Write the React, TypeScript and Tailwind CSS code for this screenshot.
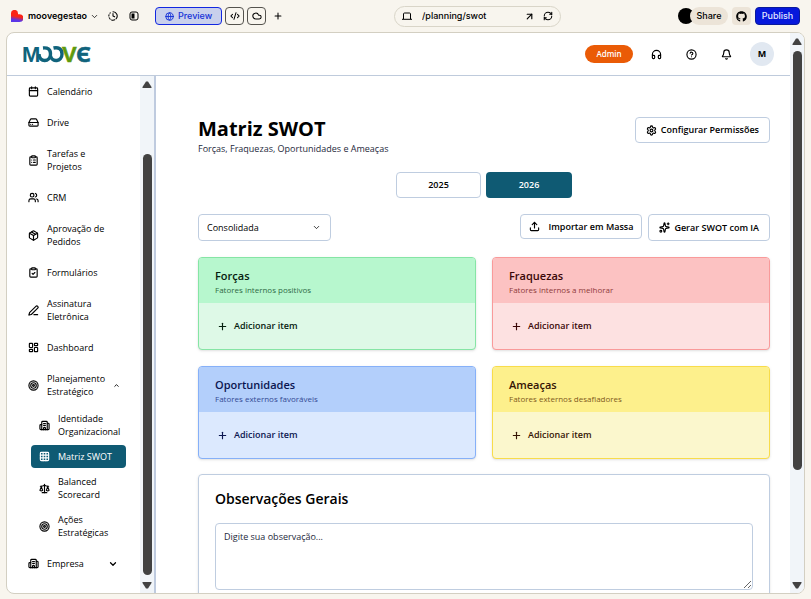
import type { ReactNode } from "react";
import {
  ArrowUpRight,
  Bell,
  Building2,
  Calendar,
  ChevronDown,
  ChevronUp,
  CircleHelp,
  ClipboardCheck,
  ClipboardList,
  ClockFading,
  Cloud,
  CodeXml,
  Globe,
  Grid3x3,
  HardDrive,
  Headphones,
  LayoutDashboard,
  Package,
  PenLine,
  Plus,
  RefreshCw,
  Scale,
  Settings,
  Sparkles,
  Target,
  Upload,
  Users,
  type LucideIcon,
} from "lucide-react";
import { FaGithub } from "react-icons/fa";

type NavItem = {
  label: string;
  icon: LucideIcon;
  active?: boolean;
  state?: "open" | "closed";
  children?: NavItem[];
};

type Quadrant = {
  title: string;
  hint: string;
  card: string;
  head: string;
  titleColor: string;
  hintColor: string;
};

const NAV: NavItem[] = [
  { label: "Calendário", icon: Calendar },
  { label: "Drive", icon: HardDrive },
  { label: "Tarefas e Projetos", icon: ClipboardList },
  { label: "CRM", icon: Users },
  { label: "Aprovação de Pedidos", icon: Package },
  { label: "Formulários", icon: ClipboardCheck },
  { label: "Assinatura Eletrônica", icon: PenLine },
  { label: "Dashboard", icon: LayoutDashboard },
  {
    label: "Planejamento Estratégico",
    icon: Target,
    state: "open",
    children: [
      { label: "Identidade Organizacional", icon: Building2 },
      { label: "Matriz SWOT", icon: Grid3x3, active: true },
      { label: "Balanced Scorecard", icon: Scale },
      { label: "Ações Estratégicas", icon: Target },
    ],
  },
  { label: "Empresa", icon: Building2, state: "closed" },
];

const QUADRANTS: Quadrant[] = [
  {
    title: "Forças",
    hint: "Fatores internos positivos",
    card: "border-[#86e5a5] bg-[#def9e7]",
    head: "bg-[#b7f7ce]",
    titleColor: "text-[#06210f]",
    hintColor: "text-[#2f6b45]",
  },
  {
    title: "Fraquezas",
    hint: "Fatores internos a melhorar",
    card: "border-[#f99a9a] bg-[#fde1e1]",
    head: "bg-[#fcc2c2]",
    titleColor: "text-[#3a0808]",
    hintColor: "text-[#8f3b3b]",
  },
  {
    title: "Oportunidades",
    hint: "Fatores externos favoráveis",
    card: "border-[#86b0f8] bg-[#dce9fe]",
    head: "bg-[#b3cffb]",
    titleColor: "text-[#0b1650]",
    hintColor: "text-[#334a94]",
  },
  {
    title: "Ameaças",
    hint: "Fatores externos desafiadores",
    card: "border-[#f8dc4a] bg-[#fbf7cd]",
    head: "bg-[#fdf08c]",
    titleColor: "text-[#351505]",
    hintColor: "text-[#7f5a1c]",
  },
];

const outline = "rounded border border-[#bfcde0] bg-white font-semibold";

function Scrollbar({ thumb, atEnd }: { thumb: number; atEnd?: boolean }) {
  return (
    <div className="flex w-3.5 shrink-0 flex-col items-center bg-[#f1f5f9]" aria-hidden="true">
      <svg viewBox="0 0 10 18" className="h-[18px] w-[10px] shrink-0 fill-[#424242]">
        <path d="M4 5.5h2l3.5 5.5v1h-9v-1z" />
      </svg>
      <div className={`flex min-h-0 w-[9px] flex-1 flex-col ${atEnd ? "justify-end" : ""}`}>
        <div className="rounded-full bg-[#424242]" style={{ height: `${thumb}%` }} />
      </div>
      <svg viewBox="0 0 10 18" className="h-[18px] w-[10px] shrink-0 fill-[#424242]">
        <path d="M4 13.5h2L9.5 8V7h-9v1z" />
      </svg>
    </div>
  );
}

function MooveLogo() {
  return (
    <svg viewBox="0 -10 70 38" className="h-[38px] w-[70px]" role="img" aria-label="Moove">
      <g fontWeight="700" fontSize="22">
        <text x="-1" y="17" fill="#10637c" fontFamily="Liberation Sans, sans-serif">M</text>
        <text x="39" y="17" fill="#5f9a0c" stroke="#5f9a0c" strokeWidth="0.6" fontFamily="Liberation Sans, sans-serif">V</text>
        <text x="53" y="17" fill="#10637c" stroke="#10637c" strokeWidth="0.6" fontFamily="Open Sans, sans-serif">Є</text>
      </g>
      <g fill="none" stroke="#10637c" strokeWidth="3.4">
        <path d="M16 9c0 9 11.500 8.500 11.500 0 0-5-3-6.500-7.500-6" />
        <path d="M27.500 11c1.500 6.500 11.500 6 11.500-2 0-5.500-4-7-8.500-6" />
      </g>
    </svg>
  );
}

function HeartMark() {
  return (
    <svg viewBox="0 0 12 12" className="h-3 w-3" aria-hidden="true">
      <defs>
        <linearGradient id="mark" x1="0.6" y1="0" x2="0.4" y2="1">
          <stop offset="0.55" stopColor="#fb2415" />
          <stop offset="0.85" stopColor="#5a35e8" />
        </linearGradient>
      </defs>
      <path d="M0 12V3.500a3.500 3.500 0 0 1 7-.2v.9h1.500a3.900 3.900 0 0 1 0 7.800z" fill="url(#mark)" />
    </svg>
  );
}

function PanelIcon() {
  return (
    <svg viewBox="0 0 10 10" className="h-[10px] w-[10px]" aria-hidden="true">
      <rect x="1" y="1" width="8" height="8" rx="2" fill="none" stroke="currentColor" />
      <path d="M2.500 2.500H5.500v5H2.500z" fill="currentColor" />
    </svg>
  );
}

function ScreenIcon() {
  return (
    <svg viewBox="0 0 10 8" className="h-2 w-[10px]" fill="none" stroke="currentColor" aria-hidden="true">
      <path d="M1.500 7V2a1 1 0 0 1 1-1h5a1 1 0 0 1 1 1v5M0 7.300h10" />
    </svg>
  );
}

function BrowserBar() {
  const square = "flex h-[18px] w-[19px] items-center justify-center rounded border border-[#55534e]";
  return (
    <div className="flex h-8 shrink-0 items-center px-[11px] font-[Inter,sans-serif] text-[9px] font-medium text-black">
      <div className="flex items-center">
        <HeartMark />
        <button className="ml-[5px] flex items-center gap-[3px] font-semibold">
          moovegestao
          <ChevronDown size={9} />
        </button>
        <button aria-label="Histórico" className="ml-[9px]"><ClockFading size={10} strokeWidth={2.5} /></button>
        <button aria-label="Painel" className="ml-[11px]"><PanelIcon /></button>
        <button className="ml-4 flex h-[18px] w-[67px] items-center justify-center gap-1 rounded border border-[#1227e0] bg-[#c9d0ec] text-[#1632d8]">
          <Globe size={9} strokeWidth={2.5} />
          Preview
        </button>
        <button aria-label="Código" className={`${square} ml-[3px]`}><CodeXml size={10} strokeWidth={2.5} /></button>
        <button aria-label="Nuvem" className={`${square} ml-[3px]`}><Cloud size={10} strokeWidth={2.5} /></button>
        <button aria-label="Adicionar" className="ml-[7px]"><Plus size={10} strokeWidth={2.5} /></button>
      </div>
      <div className="flex flex-1 justify-center pr-1.5">
        <div className="flex h-[21px] w-[167px] items-center rounded-full border border-[#d9d5c8] px-[7px]">
          <ScreenIcon />
          <input
            aria-label="Endereço"
            defaultValue="/planning/swot"
            className="ml-2.5 w-0 flex-1 bg-transparent outline-none"
          />
          <button aria-label="Abrir"><ArrowUpRight size={11} strokeWidth={2.5} /></button>
          <button aria-label="Recarregar" className="ml-2"><RefreshCw size={10} strokeWidth={2.5} /></button>
        </div>
      </div>
      <div className="flex items-center">
        <span className="h-4 w-4 rounded-full bg-black" />
        <button className="-ml-1 flex h-[18px] w-[38px] items-center justify-center rounded-full bg-[#ece4d8]">Share</button>
        <button aria-label="GitHub" className="ml-1 flex h-[18px] w-[19px] items-center justify-center rounded bg-[#ece4d8]">
          <FaGithub size={11} />
        </button>
        <button className="ml-1 h-[18px] w-[45px] rounded border border-[#0a1a9c] bg-[#0618dc] text-[#e4e7ff]">Publish</button>
      </div>
    </div>
  );
}

function Header() {
  return (
    <header className="flex h-[43px] shrink-0 items-center justify-between border-b border-[#bfcbdc] px-4">
      <MooveLogo />
      <div className="flex items-center gap-3">
        <div className="flex items-center gap-[11px]">
          <button className="h-[18px] w-12 rounded-full bg-[#ea5b06] text-[8px] font-semibold text-white">Admin</button>
          {[
            { label: "Suporte", Icon: Headphones },
            { label: "Ajuda", Icon: CircleHelp },
            { label: "Notificações", Icon: Bell },
          ].map(({ label, Icon }) => (
            <button key={label} aria-label={label} className="flex h-6 w-6 items-center justify-center">
              <Icon size={11} strokeWidth={2.5} />
            </button>
          ))}
        </div>
        <button className="h-6 w-6 rounded-full bg-[#e1e8f1] font-bold">M</button>
      </div>
    </header>
  );
}

function NavLink({ item, sub }: { item: NavItem; sub?: boolean }) {
  const Icon = item.icon;
  return (
    <a
      href="#"
      className={`flex items-center gap-2 rounded py-[5px] leading-[13px] ${sub ? "px-2" : "pr-[22px] pl-[21px]"} ${
        item.active ? "bg-[#0f5a73] text-white" : ""
      }`}
    >
      <Icon size={11} strokeWidth={2.5} className="shrink-0" />
      <span className="flex-1">{item.label}</span>
      {item.state === "open" && <ChevronUp size={7} strokeWidth={3} className="mr-px shrink-0" />}
      {item.state === "closed" && <ChevronDown size={10} strokeWidth={3} className="shrink-0" />}
    </a>
  );
}

function Sidebar() {
  return (
    <aside className="flex w-[149px] shrink-0 border-r-2 border-[#bfcbdf]">
      <nav className="min-w-0 flex-1 overflow-hidden pt-1 font-medium">
        <ul className="flex flex-col gap-2">
          {NAV.map((item) => (
            <li key={item.label}>
              <NavLink item={item} />
              {item.children && (
                <ul className="mt-1 mr-3.5 ml-6 flex flex-col gap-0.5">
                  {item.children.map((child) => (
                    <li key={child.label}>
                      <NavLink item={child} sub />
                    </li>
                  ))}
                </ul>
              )}
            </li>
          ))}
        </ul>
      </nav>
      <Scrollbar thumb={87.5} atEnd />
    </aside>
  );
}

function QuadrantCard({ q }: { q: Quadrant }) {
  return (
    <section className={`overflow-hidden rounded border shadow-sm ${q.card}`}>
      <div className={`h-[45px] px-4 pt-2.5 ${q.head}`}>
        <h2 className={`text-[11px] leading-4 font-semibold ${q.titleColor}`}>{q.title}</h2>
        <p className={`text-[8px] leading-3 ${q.hintColor}`}>{q.hint}</p>
      </div>
      <div className={`px-4 py-[11px] ${q.titleColor}`}>
        <button className="flex h-6 items-center gap-1.5 px-0.5 font-semibold">
          <Plus size={11} strokeWidth={2.5} />
          Adicionar item
        </button>
      </div>
    </section>
  );
}

function Content({ children }: { children: ReactNode }) {
  return <main className="min-w-0 flex-1 overflow-hidden pt-[41px] pr-5 pl-[42px]">{children}</main>;
}

export default function App() {
  return (
    <div className="flex h-screen flex-col bg-[#f8f5ee] text-[9px] text-black">
      <BrowserBar />
      <div className="mr-1.5 mb-[5px] ml-1.5 flex min-h-0 flex-1 overflow-hidden rounded-lg border border-[#d3cfc2] bg-white font-['Open_Sans',sans-serif]">
        <div className="flex min-w-0 flex-1 flex-col">
          <Header />
          <div className="flex min-h-0 flex-1">
            <Sidebar />
            <Content>
              <div className="flex items-start justify-between">
                <div>
                  <h1 className="text-xl leading-6 font-bold">Matriz SWOT</h1>
                  <p className="leading-[15px] text-[#1e293b]">Forças, Fraquezas, Oportunidades e Ameaças</p>
                </div>
                <button className={`${outline} flex h-[26px] items-center gap-1 px-2.5`}>
                  <Settings size={11} strokeWidth={2.5} />
                  Configurar Permissões
                </button>
              </div>

              <div className="mt-4 flex justify-center gap-[5px]">
                <button className={`${outline} h-[26px] w-[85px]`}>2025</button>
                <button className="h-[26px] w-[86px] rounded bg-[#0f5a73] font-semibold text-white">2026</button>
              </div>

              <div className="mt-4 flex items-start justify-between">
                <div className="relative">
                  <select
                    aria-label="Visão"
                    className="h-[27px] w-[133px] appearance-none rounded border border-[#bfcde0] bg-white px-2 font-medium"
                  >
                    <option>Consolidada</option>
                  </select>
                  <ChevronDown size={9} className="pointer-events-none absolute top-[9px] right-2.5" />
                </div>
                <div className="flex items-start gap-1.5">
                  <button className={`${outline} flex h-[25px] items-center gap-2 px-2`}>
                    <Upload size={11} strokeWidth={2.5} />
                    Importar em Massa
                  </button>
                  <button className={`${outline} flex h-[27px] items-center gap-1 px-2.5`}>
                    <Sparkles size={11} strokeWidth={2.5} />
                    Gerar SWOT com IA
                  </button>
                </div>
              </div>

              <div className="mt-4 grid grid-cols-2 gap-4">
                {QUADRANTS.map((q) => (
                  <QuadrantCard key={q.title} q={q} />
                ))}
              </div>

              <section className="mt-[15px] rounded border border-[#bfcde0] px-4 pt-3.5 pb-4 shadow-sm">
                <h2 className="text-sm leading-5 font-semibold">
                  <label htmlFor="notes">Observações Gerais</label>
                </h2>
                <textarea
                  id="notes"
                  placeholder="Digite sua observação..."
                  className="mt-3.5 block h-[67px] w-full rounded border border-[#bfcde0] px-2 py-1.5 placeholder:text-[#1e293b]"
                />
              </section>
            </Content>
          </div>
        </div>
        <Scrollbar thumb={80} />
      </div>
    </div>
  );
}
